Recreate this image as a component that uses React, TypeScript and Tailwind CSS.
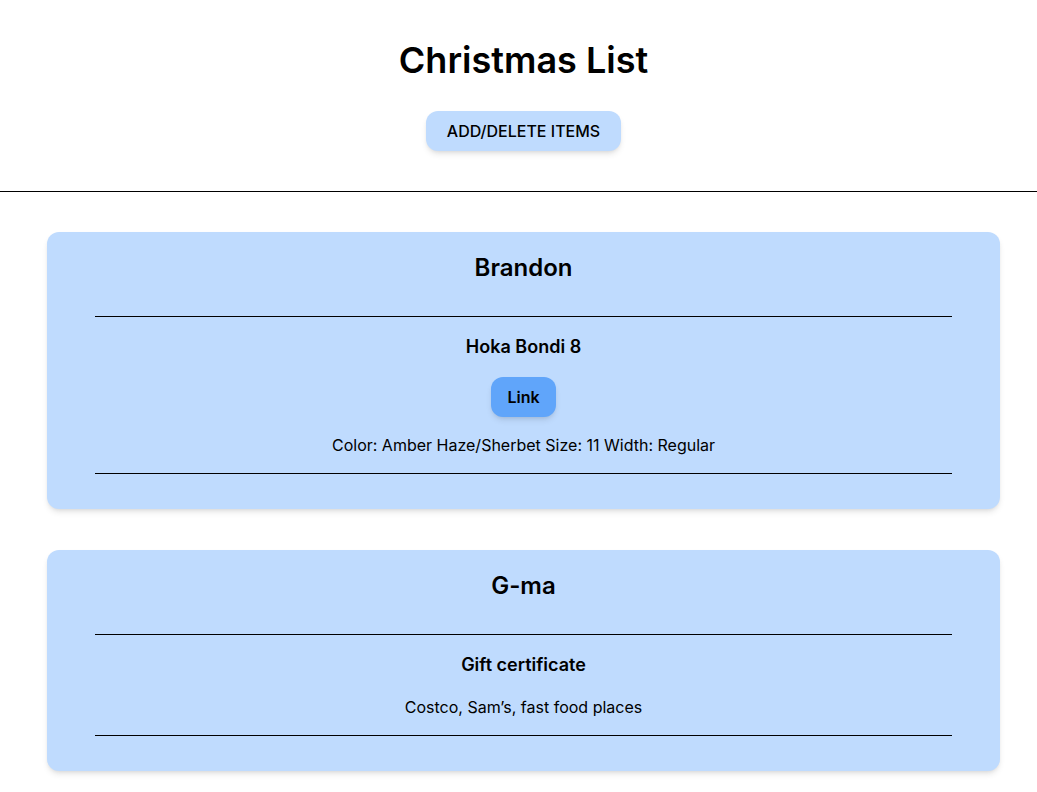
const people = [
  {
    name: 'Brandon',
    items: [
      {
        title: 'Hoka Bondi 8',
        link: '#',
        notes: 'Color: Amber Haze/Sherbet Size: 11 Width: Regular',
      },
    ],
  },
  {
    name: 'G-ma',
    items: [
      {
        title: 'Gift certificate',
        link: '',
        notes: 'Costco, Sam’s, fast food places',
      },
    ],
  },
];

export default function App() {
  return (
    <div className="min-h-screen bg-white text-black font-['Inter',sans-serif]">
      {/* header */}
      <div className="flex flex-col items-center pt-10 pl-[10px]">
        <h1 className="text-4xl font-semibold leading-10">Christmas List</h1>
        <button className="mt-[31px] bg-[#bfdbfe] px-[21px] py-2 rounded-xl text-base font-medium leading-6 uppercase shadow-md">
          Add/Delete Items
        </button>
      </div>
      <hr className="mt-10 border-0 border-t border-black" />

      {/* cards */}
      <div className="pl-[10px] pt-10 pb-10 flex flex-col gap-[41px]">
        {people.map((p) => (
          <div key={p.name} className="mx-[37px] bg-[#bfdbfe] rounded-xl shadow-md px-12 pt-5 pb-[35px]">
            <h2 className="text-2xl font-semibold leading-8 text-center">{p.name}</h2>
            <div className="mt-8 border-t border-black">
              {p.items.map((item) => (
                <div key={item.title} className="flex flex-col items-center gap-4 py-4 border-b border-black">
                  <h3 className="text-lg font-semibold leading-7">{item.title}</h3>
                  {item.link && (
                    <a href={item.link} className="bg-[#60a5fa] px-4 py-2 rounded-xl text-base font-semibold leading-6 shadow-md">
                      Link
                    </a>
                  )}
                  <p className="text-base leading-6">{item.notes}</p>
                </div>
              ))}
            </div>
          </div>
        ))}
      </div>
    </div>
  );
}
